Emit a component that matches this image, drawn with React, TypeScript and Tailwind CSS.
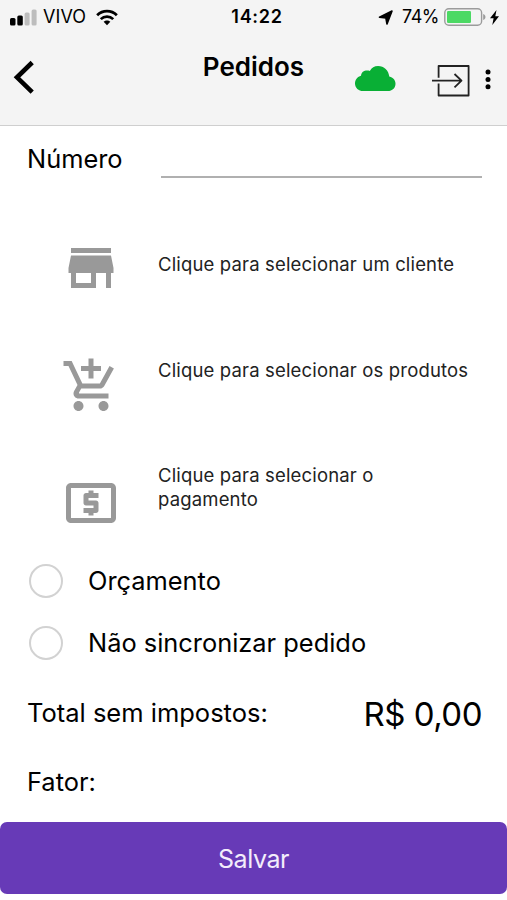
import { useState } from 'react'
import { MdAddShoppingCart, MdLocalAtm, MdStore } from 'react-icons/md'

const actions = [
  { id: 'cliente', label: 'Clique para selecionar um cliente', Icon: MdStore, row: 'h-[106px]', icon: 'mt-[26px]' },
  { id: 'produtos', label: 'Clique para selecionar os produtos', Icon: MdAddShoppingCart, row: 'h-[105px]', icon: 'mt-[37.5px]' },
  { id: 'pagamento', label: 'Clique para selecionar o pagamento', Icon: MdLocalAtm, row: 'h-[127px]', icon: 'mt-[49.5px]' },
]

function StatusBar() {
  return (
    <div className="grid h-[34px] grid-cols-[1fr_auto_1fr] items-center text-[18px] leading-[34px]">
      <div className="flex items-center pl-[10px]">
        <svg width="27" height="17" viewBox="0 0 27 17">
          <rect x="0" y="9" width="5.5" height="7.5" rx="1.5" fill="#000" />
          <rect x="7.3" y="6.5" width="5.5" height="10" rx="1.5" fill="#000" />
          <rect x="14.6" y="3.5" width="5" height="13" rx="1.5" fill="#bdbdbd" />
          <rect x="21.6" y="0.5" width="5" height="16" rx="1.5" fill="#bdbdbd" />
        </svg>
        <span className="ml-[6px] tracking-[0.1px]">VIVO</span>
        <svg className="ml-[10px]" width="22" height="17" viewBox="0 0 23 17" fill="none" stroke="#000" strokeWidth="2.9">
          <path d="M1.2 6.2C7 .5 16 .5 21.8 6.2" />
          <path d="M5 10.2c3.7-3.6 9.3-3.6 13 0" />
          <path d="M8 13c2-1.9 5-1.9 7 0l-3.5 3.5z" fill="#000" stroke="none" />
        </svg>
      </div>
      <span className="pl-[7px] font-semibold tracking-[0.7px]">14:22</span>
      <div className="flex items-center justify-end pr-[8px]">
        <svg width="15" height="15" viewBox="0 0 15 15">
          <path d="M14 1 9 14 7.900 8 1.500 7.200z" stroke="#000" strokeWidth="1.600" strokeLinejoin="round" />
        </svg>
        <span className="ml-[9px] tracking-[-0.5px]">74%</span>
        <svg className="ml-[5px]" width="42" height="18" viewBox="0 0 42 18">
          <rect x="0.8" y="0.8" width="36.8" height="16.4" rx="4" fill="none" stroke="#9b9b9b" strokeWidth="1.4" />
          <rect x="3" y="3" width="24" height="12" rx="1.2" fill="#4cd964" />
          <path d="M39.2 6c3 .7 3 5.300 0 6z" fill="#9b9b9b" />
        </svg>
        <svg className="ml-[4px]" width="9" height="15" viewBox="0 0 9 15">
          <path d="M6.500 0 0 8.300h3.600L2.300 15 9 6.300H5.300z" />
        </svg>
      </div>
    </div>
  )
}

function Header() {
  return (
    <header className="h-[126px] border-b border-[#cfcfcf] bg-[#f4f4f4]">
      <StatusBar />
      <div className="grid grid-cols-[1fr_auto_1fr]">
        <button className="mt-[26px] ml-[13px] h-[35px] w-[22px]" aria-label="Voltar">
          <svg width="22" height="35" viewBox="0 0 22 35" fill="none" stroke="#000" strokeWidth="4.600">
            <path d="M19.2 2.500 4 17.300l15.200 14.800" />
          </svg>
        </button>
        <h1 className="mt-[17px] text-[26px] leading-[32px] font-semibold">Pedidos</h1>
        <div className="mt-[30px] flex justify-end pr-[16px]">
          <svg className="mt-[2px]" width="41" height="25" viewBox="0 0 41 25" fill="#09af35">
            <path d="M8.200 25C3.500 25 0 21.700 0 17.400c0-3.900 2.700-6.800 6-7.600.3-3.400 2.800-5.200 6.100-5.200 1 0 1.900.1 2.700.4C16.700 1.700 19.300 0 23.100 0c5.900 0 10.600 4.500 11.200 10.600 3.700.9 6.200 3.600 6.200 7.100 0 4.200-3.200 7.300-7.700 7.300z" />
          </svg>
          <svg className="ml-[36px]" width="38" height="34" viewBox="0 0 38 34" fill="none" stroke="#222" strokeWidth="1.800" strokeLinejoin="round">
            <path d="M6.600 13.800V2h30v29.500h-30V19.500" />
            <path d="M0 16.700h29.500M22.500 10l7 6.700-7 6.700" />
          </svg>
          <svg className="ml-[15px]" width="6" height="34" viewBox="0 0 6 34">
            <circle cx="3" cy="8" r="2.500" />
            <circle cx="3" cy="15.400" r="2.500" />
            <circle cx="3" cy="22.800" r="2.500" />
          </svg>
        </div>
      </div>
    </header>
  )
}

function Option({ label }: { label: string }) {
  const [checked, setChecked] = useState(false)
  return (
    <button onClick={() => setChecked(!checked)} className="flex h-[62px] w-full items-center pl-[29px] text-left">
      <span className={`h-[34px] w-[34px] shrink-0 rounded-full border-2 ${checked ? 'border-[#673ab7] bg-[#673ab7]' : 'border-[#d2d2d2]'}`} />
      <span className="ml-[25px] text-[25.4px] leading-[38px]">{label}</span>
    </button>
  )
}

export default function App() {
  const [numero, setNumero] = useState('')

  return (
    <div className="flex h-[900px] w-[507px] flex-col overflow-hidden bg-white font-['Inter',sans-serif] text-black">
      <Header />

      <main className="flex-1">
        {/* Número */}
        <label className="flex h-[86px] items-start pr-[25px] pl-[27px]">
          <span className="mt-[15px] w-[134px] text-[25.4px] leading-[36px]">Número</span>
          <input
            value={numero}
            onChange={e => setNumero(e.target.value)}
            className="mt-[10px] h-[42px] min-w-0 flex-1 border-b-2 border-[#b0b0b0] bg-transparent text-[25px] outline-none"
          />
        </label>

        {/* Seleções */}
        {actions.map(({ id, label, Icon, row, icon }) => (
          <button key={id} className={`flex w-full items-start pr-[34px] pl-[61px] text-left ${row}`}>
            <Icon className={`h-[60px] w-[60px] shrink-0 text-[#999] ${icon}`} />
            <span className="mt-[40px] ml-[37px] text-[18.5px] leading-[24px] tracking-[0.16px] text-[#222]">{label}</span>
          </button>
        ))}

        <Option label="Orçamento" />
        <Option label="Não sincronizar pedido" />

        {/* Totais */}
        <div className="flex h-[78px] items-center justify-between pr-[25px] pl-[27px]">
          <span className="text-[25.5px] leading-[38px]">Total sem impostos:</span>
          <span className="mt-[3px] text-[33px] tracking-[-0.5px]">R$ 0,00</span>
        </div>
        <div className="pl-[27px] text-[25.4px] leading-[60px]">Fator:</div>
      </main>

      <button className="mb-[6px] h-[72px] shrink-0 rounded-[7px] bg-[#673ab7] pt-[3px] text-[25px] tracking-[-0.4px] text-[#f3edfb]">Salvar</button>
    </div>
  )
}
